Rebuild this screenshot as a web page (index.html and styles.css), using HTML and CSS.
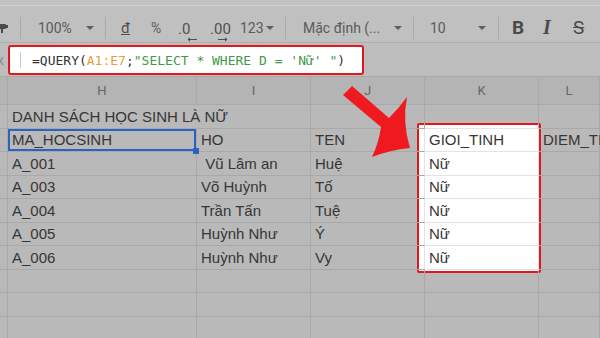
FILE: index.html
```html
<!DOCTYPE html>
<html lang="vi">
<head>
<meta charset="utf-8">
<link rel="stylesheet" href="styles.css">
</head>
<body>
<div class="app">
  <div class="topline"></div>
  <div class="toolbar">
    <span class="slot s-paint"><svg class="paint" width="10" height="10" viewBox="0 0 10 10"><rect x="0" y="1" width="8" height="5" rx="1" fill="#4a4a4a"/><rect x="8" y="2" width="2" height="3" fill="#4a4a4a"/><rect x="3" y="6" width="2" height="4" fill="#4a4a4a"/></svg></span>
    <span class="slot s-18"><i class="sep"></i></span>
    <span class="slot s-48">100%</span>
    <span class="slot s-19"><i class="caret"></i></span>
    <span class="slot s-16"><i class="sep"></i></span>
    <span class="slot s-30"><span class="dong">đ</span></span>
    <span class="slot s-27">%</span>
    <span class="slot s-32"><span class="dec"><span>.0</span><svg class="arr arr-l" width="10" height="5" viewBox="0 0 10 5"><path d="M0.5 2.5 L3 0.3 V1.9 H10 V3.1 H3 V4.7 Z" fill="#4e4e4e"/></svg></span></span>
    <span class="slot s-30"><span class="dec"><span>.00</span><svg class="arr arr-r" width="10" height="5" viewBox="0 0 10 5"><path d="M9.5 2.5 L7 0.3 V1.9 H0 V3.1 H7 V4.7 Z" fill="#4e4e4e"/></svg></span></span>
    <span class="slot s-26">123</span>
    <span class="slot s-19"><i class="caret"></i></span>
    <span class="slot s-18"><i class="sep"></i></span>
    <span class="slot s-91">Mặc định (...</span>
    <span class="slot s-19"><i class="caret"></i></span>
    <span class="slot s-17"><i class="sep"></i></span>
    <span class="slot s-48">10</span>
    <span class="slot s-20"><i class="caret"></i></span>
    <span class="slot s-14"><i class="sep"></i></span>
    <span class="slot s-31 bold">B</span>
    <span class="slot s-30 ital">I</span>
    <span class="slot s-27 strike">S</span>
  </div>
  <div class="fbar">
    <span class="fx">x</span>
    <div class="fbox">
      <span class="cur"></span>
      <span class="ftext">=QUERY(<span class="ref">A1:E7</span>;<span class="str">"SELECT * WHERE D = 'Nữ' "</span>)</span>
    </div>
  </div>
  <div class="sheet">
    <div class="grid">
      <div class="c h"></div><div class="c h">H</div><div class="c h">I</div><div class="c h">J</div><div class="c h">K</div><div class="c h">L</div>

      <div class="c"></div><div class="c over">DANH SÁCH HỌC SINH LÀ NỮ</div><div class="c"></div><div class="c"></div><div class="c in-top"></div><div class="c"></div>

      <div class="c"></div><div class="c sel">MA_HOCSINH</div><div class="c">HO</div><div class="c inl">TEN</div><div class="c in">GIOI_TINH</div><div class="c">DIEM_TINH</div>

      <div class="c"></div><div class="c">A_001</div><div class="c"> Vũ Lâm an</div><div class="c inl">Huệ</div><div class="c in">Nữ</div><div class="c"></div>

      <div class="c"></div><div class="c">A_003</div><div class="c">Võ Huỳnh</div><div class="c inl">Tố</div><div class="c in">Nữ</div><div class="c"></div>

      <div class="c"></div><div class="c">A_004</div><div class="c">Trần Tấn</div><div class="c inl">Tuệ</div><div class="c in">Nữ</div><div class="c"></div>

      <div class="c"></div><div class="c">A_005</div><div class="c">Huỳnh Như</div><div class="c inl">Ý</div><div class="c in">Nữ</div><div class="c"></div>

      <div class="c"></div><div class="c">A_006</div><div class="c">Huỳnh Như</div><div class="c inl">Vy</div><div class="c in">Nữ</div><div class="c"></div>

      <div class="c"></div><div class="c"></div><div class="c"></div><div class="c"></div><div class="c"></div><div class="c"></div>
      <div class="c"></div><div class="c"></div><div class="c"></div><div class="c"></div><div class="c"></div><div class="c"></div>
      <div class="c"></div><div class="c"></div><div class="c"></div><div class="c"></div><div class="c"></div><div class="c"></div>
    </div>
    <div class="hl"></div>
  </div>
  <svg class="arrow" width="600" height="338" viewBox="0 0 600 338">
    <path d="M343 95 L352 86 L389 118 Q399 108 407 97 Q402 122 410 148 Q390 150 372 157 Q379 142 381 127 Z" fill="#ee1a1f"/>
  </svg>
</div>
</body>
</html>
```

FILE: styles.css
```css
* { box-sizing: border-box; }
html, body {
  margin: 0;
  padding: 0;
  width: 600px;
  height: 338px;
  overflow: hidden;
  background: #bababa;
}
.app {
  position: relative;
  width: 600px;
  height: 338px;
  font-family: Roboto, "Liberation Sans", sans-serif;
}
.topline {
  height: 6px;
  background: #c2c2c2;
  border-bottom: 1px solid #d2d2d2;
}
.toolbar {
  height: 37px;
  display: flex;
  align-items: center;
  padding-top: 7px;
  background: #c0c0c0;
  border-bottom: 1px solid #adadad;
  color: #5a5a5a;
  font-size: 14px;
  white-space: nowrap;
  overflow: hidden;
}
.slot {
  flex: none;
  display: flex;
  align-items: center;
  height: 28px;
}
.s-paint { width: 20px; }
.s-14 { width: 14px; }
.s-16 { width: 16px; }
.s-17 { width: 17px; }
.s-18 { width: 18px; }
.s-19 { width: 19px; }
.s-20 { width: 20px; }
.s-26 { width: 26px; }
.s-27 { width: 27px; }
.s-30 { width: 30px; }
.s-31 { width: 31px; }
.s-32 { width: 32px; }
.s-48 { width: 48px; }
.s-91 { width: 91px; }
.paint { margin-left: -2px; }
.sep {
  display: block;
  width: 1px;
  height: 22px;
  background: #a9a9a9;
}
.caret {
  display: block;
  width: 0;
  height: 0;
  border-left: 4px solid transparent;
  border-right: 4px solid transparent;
  border-top: 4px solid #5e5e5e;
}
.dong {
  text-decoration: underline;
  font-size: 15px;
  color: #505050;
}
.dec {
  display: flex;
  flex-direction: column;
  padding-top: 8px;
  line-height: 16px;
  font-size: 15px;
  color: #505050;
}
.arr { display: block; margin-top: 0; }
.arr-l { margin-left: 9px; }
.arr-r { margin-left: 8px; }
.bold {
  font-weight: 700;
  font-size: 19px;
  color: #4a4a4a;
}
.ital {
  font-family: "Liberation Serif", serif;
  font-style: italic;
  font-weight: 700;
  font-size: 20px;
  color: #4a4a4a;
}
.strike {
  text-decoration: line-through;
  font-size: 19px;
  color: #4a4a4a;
}
.fbar {
  height: 34px;
  display: flex;
  align-items: flex-start;
  padding-top: 2px;
  background: #bdbdbd;
  border-bottom: 1px solid #a8a8a8;
}
.fx {
  width: 8px;
  line-height: 30px;
  margin-left: -3px;
  margin-right: 3px;
  font-size: 14px;
  color: #8c8c8c;
}
.fbox {
  width: 356px;
  height: 30px;
  display: flex;
  align-items: center;
  background: #fff;
  border: 2px solid #e2161f;
  border-radius: 3px;
}
.cur {
  width: 1px;
  height: 16px;
  margin-left: 10px;
  background: #c6c6c6;
}
.ftext {
  margin-left: 11px;
  font-family: "DejaVu Sans Mono", "Liberation Mono", monospace;
  font-size: 13px;
  color: #333;
  white-space: pre;
}
.ref { color: #e3a13a; }
.str { color: #3f9a45; }
.sheet {
  position: relative;
  isolation: isolate;
  background: #b9b9b9;
}
.grid {
  display: grid;
  grid-template-columns: 8px 189px 114px 114px 114px 61px;
  grid-template-rows: 28px repeat(10, 23.5px);
}
.c {
  position: relative;
  z-index: 1;
  display: flex;
  align-items: center;
  padding-left: 4px;
  border-right: 1px solid #a9a9a9;
  border-bottom: 1px solid #a9a9a9;
  font-family: "Liberation Sans", Arial, sans-serif;
  font-size: 15px;
  color: #363636;
  white-space: pre;
}
.h {
  justify-content: center;
  padding-left: 0;
  background: #b4b4b4;
  font-family: Roboto, "Liberation Sans", sans-serif;
  font-size: 13px;
  color: #666;
}
.over { border-right-color: transparent; }
.in {
  border-bottom-color: #e3e3e3;
  border-right-color: #e3e3e3;
}
.in-top { border-bottom-color: #e3e3e3; }
.inl { border-right-color: #e3e3e3; }
.sel {
  z-index: 2;
  box-shadow: inset 0 0 0 2px #2a63c2;
}
.sel::after {
  content: "";
  position: absolute;
  right: -3px;
  bottom: -3px;
  width: 6px;
  height: 6px;
  background: #2a63c2;
}
.hl {
  position: absolute;
  z-index: 0;
  left: 417px;
  top: 46px;
  width: 124px;
  height: 150px;
  background: #fff;
  border: 2px solid #e3161e;
  border-radius: 2px;
}
.arrow {
  position: absolute;
  left: 0;
  top: 0;
  z-index: 5;
  pointer-events: none;
}
```
